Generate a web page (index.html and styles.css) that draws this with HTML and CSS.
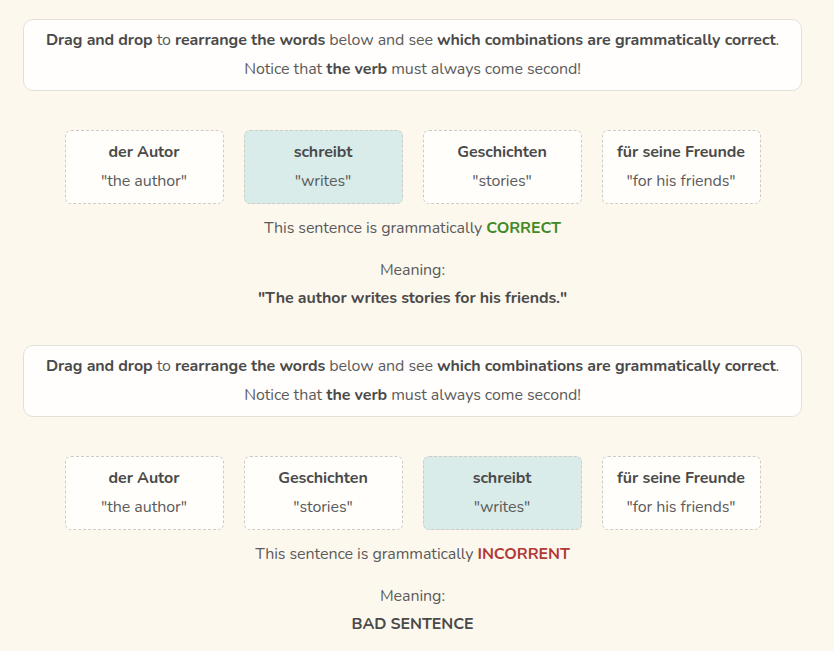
FILE: index.html
```html
<!DOCTYPE html>
<html>
<head>
<meta charset="utf-8">
<link rel="stylesheet" href="styles.css">
</head>
<body>
<div class="page">
  <section class="exercise">
    <div class="instructions">
      <p><b>Drag and drop</b> to <b>rearrange the words</b> below and see <b>which combinations are grammatically correct</b>.</p>
      <p>Notice that <b>the verb</b> must always come second!</p>
    </div>
    <div class="words">
      <div class="word"><div class="de">der Autor</div><div class="en">"the author"</div></div>
      <div class="word verb"><div class="de">schreibt</div><div class="en">"writes"</div></div>
      <div class="word"><div class="de">Geschichten</div><div class="en">"stories"</div></div>
      <div class="word"><div class="de">für seine Freunde</div><div class="en">"for his friends"</div></div>
    </div>
    <p class="status">This sentence is grammatically <b class="ok">CORRECT</b></p>
    <p class="meaning-label">Meaning:</p>
    <p class="meaning">"The author writes stories for his friends."</p>
  </section>
  <section class="exercise">
    <div class="instructions">
      <p><b>Drag and drop</b> to <b>rearrange the words</b> below and see <b>which combinations are grammatically correct</b>.</p>
      <p>Notice that <b>the verb</b> must always come second!</p>
    </div>
    <div class="words">
      <div class="word"><div class="de">der Autor</div><div class="en">"the author"</div></div>
      <div class="word"><div class="de">Geschichten</div><div class="en">"stories"</div></div>
      <div class="word verb"><div class="de">schreibt</div><div class="en">"writes"</div></div>
      <div class="word"><div class="de">für seine Freunde</div><div class="en">"for his friends"</div></div>
    </div>
    <p class="status">This sentence is grammatically <b class="bad">INCORRENT</b></p>
    <p class="meaning-label">Meaning:</p>
    <p class="meaning">BAD SENTENCE</p>
  </section>
</div>
</body>
</html>
```
FILE: styles.css
```css
html, body {
  margin: 0;
  padding: 0;
  background: #fdf8ee;
}
body {
  font-family: "Nunito", Lato, "Open Sans", sans-serif;
  font-size: 16px;
  line-height: 24px;
  letter-spacing: -0.08px;
  color: #5b5b5b;
}
b { font-weight: 700; color: #4a4a4a; }
.page {
  width: 779px;
  margin-left: 23px;
  padding-top: 19px;
}
.exercise { margin-bottom: 35px; }
.exercise p { margin: 0; text-align: center; }
.instructions {
  background: #fffefc;
  border: 1px solid #e3e0d8;
  border-radius: 10px;
  padding: 8px 0 9px;
  display: flex;
  flex-direction: column;
  gap: 5px;
}
.words {
  margin-top: 39px;
  display: flex;
  justify-content: center;
  gap: 20px;
}
.word {
  width: 157px;
  border: 1px dashed #cfcbc3;
  border-radius: 6px;
  background: #fffefb;
  padding: 9px 0 10px;
  text-align: center;
  display: flex;
  flex-direction: column;
  gap: 5px;
}
.word.verb { background: #d9ecea; }
.de { font-weight: 700; color: #4a4a4a; }
.en { color: #5b5b5b; }
.exercise .status { margin-top: 12px; }
.exercise .meaning-label { margin-top: 18px; }
.exercise .meaning { margin-top: 4px; font-weight: 700; color: #4a4a4a; }
.ok { color: #3f8a25; }
.bad { color: #b23a36; }
```
